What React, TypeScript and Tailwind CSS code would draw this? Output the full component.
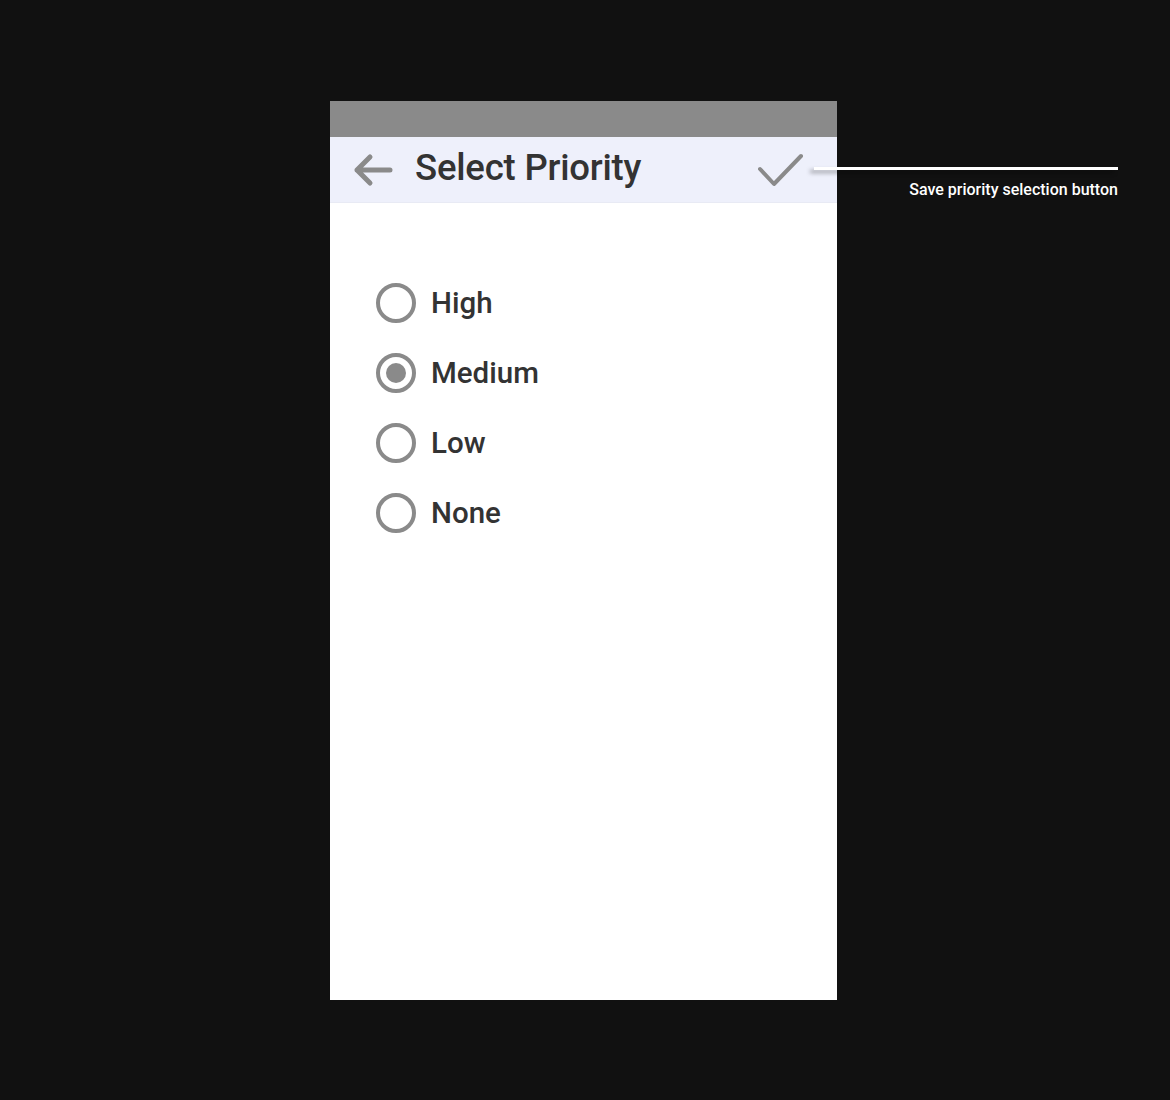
import { useState } from 'react';

const PRIORITIES = ['High', 'Medium', 'Low', 'None'] as const;

type Priority = (typeof PRIORITIES)[number];

/** Round radio marker: gray ring, filled dot when picked. */
function RadioMark({ checked }: { checked: boolean }) {
  return (
    <span className="flex h-[40px] w-[40px] shrink-0 items-center justify-center rounded-full border-[4px] border-[#8a8a8a]">
      {checked && <span className="h-[20px] w-[20px] rounded-full bg-[#8a8a8a]" />}
    </span>
  );
}

export default function App() {
  const [priority, setPriority] = useState<Priority>('Medium');

  return (
    <div
      className="relative min-h-[1100px] w-full bg-[#111111]"
      style={{ fontFamily: 'Roboto, "Noto Sans", sans-serif' }}
    >
      <div className="flex pt-[101px] pl-[330px]">
        <div className="flex h-[899px] w-[507px] flex-col bg-white">
          {/* status bar */}
          <div className="h-[36px] bg-[#8a8a8a]" />
          {/* app bar */}
          <div className="flex h-[66px] items-center border-b border-[#e8eaf4] bg-[#eef0fb] pl-[23px] pr-[33px]">
            <button type="button" className="flex h-[40px] w-[42px] items-center">
              <svg width="40" height="34" viewBox="0 0 40 34" fill="none">
                <path
                  d="M37 17H4M17 4L4 17l13 13"
                  stroke="#8a8a8a"
                  strokeWidth="5"
                  strokeLinecap="round"
                  strokeLinejoin="round"
                />
              </svg>
            </button>
            <h1 className="ml-[20px] flex-1 pb-[2px] text-[36.5px] leading-none font-medium tracking-[-0.2px] text-[#333333]">
              Select Priority
            </h1>
            <button type="button" className="flex items-center">
              <svg width="46" height="34" viewBox="0 0 46 34" fill="none">
                <path
                  d="M2 16l14 15L43 3"
                  stroke="#8a8a8a"
                  strokeWidth="4"
                  strokeLinecap="round"
                  strokeLinejoin="round"
                />
              </svg>
            </button>
          </div>
          {/* options */}
          <div className="flex flex-col gap-[30px] pt-[80px] pl-[46px]">
            {PRIORITIES.map((p) => (
              <label
                key={p}
                className="flex h-[40px] cursor-pointer items-center gap-[15px]"
                onClick={() => setPriority(p)}
              >
                <RadioMark checked={priority === p} />
                <span className="pt-[2px] text-[29.5px] leading-none font-medium text-[#333333]">{p}</span>
              </label>
            ))}
          </div>
        </div>
      </div>

      {/* callout for the save button */}
      <div className="absolute top-[167px] left-[814px] flex w-[304px] flex-col items-end">
        <div className="h-[3px] w-full bg-white shadow-[-4px_3px_4px_rgba(0,0,0,0.35)]" />
        <span className="mt-[12px] text-[16px] leading-none font-medium text-white">
          Save priority selection button
        </span>
      </div>
    </div>
  );
}
